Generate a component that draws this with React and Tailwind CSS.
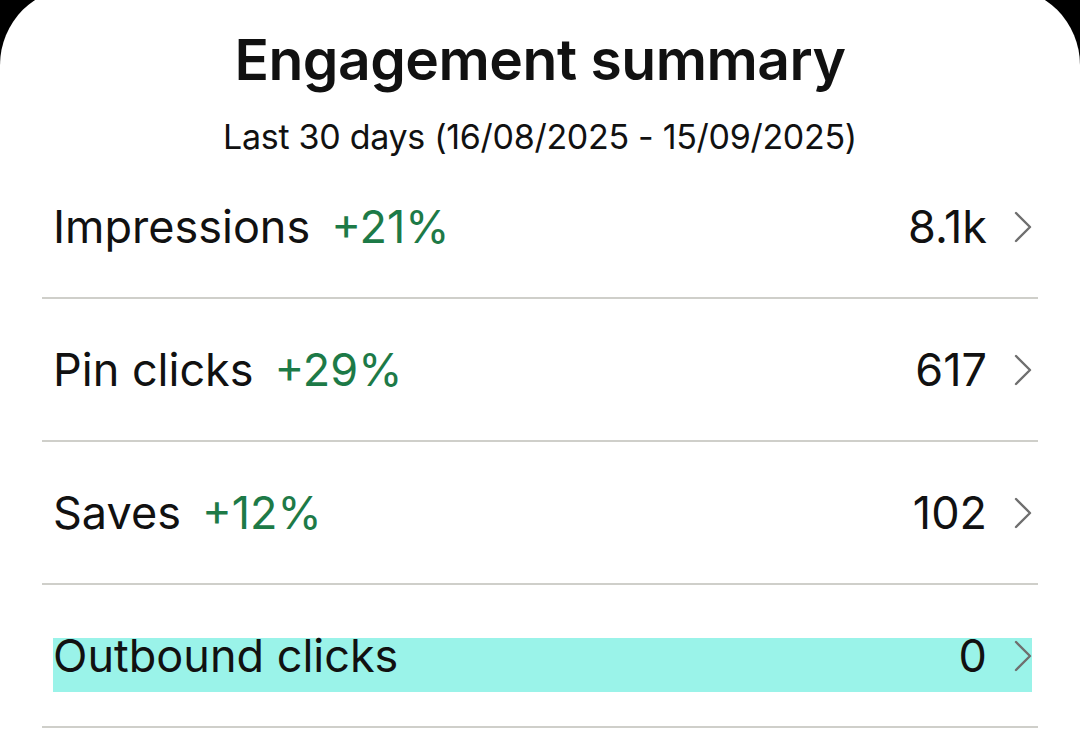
import React from "react";

const rows = [
  { label: "Impressions", change: "+21%", value: "8.1k" },
  { label: "Pin clicks", change: "+29%", value: "617" },
  { label: "Saves", change: "+12%", value: "102" },
  { label: "Outbound clicks", change: null, value: "0", highlight: true },
];

const Chevron = () => (
  <svg width="18" height="32" viewBox="0 0 18 32" fill="none">
    <polyline
      points="2,2 16,16 2,30"
      stroke="#6f6f6f"
      strokeWidth="2.4"
      strokeLinecap="round"
      strokeLinejoin="round"
    />
  </svg>
);

const App = () => {
  return (
    <div className="w-[1080px] h-[740px] bg-black overflow-hidden font-['Inter',sans-serif]">
      <div className="-mt-[13px] h-[760px] bg-white rounded-t-[78px] pt-[38px]">
        <h1 className="text-center text-[57px] leading-[70px] font-semibold text-[#111] tracking-[-0.5px]">
          Engagement summary
        </h1>
        <p className="text-center text-[34px] leading-[42px] text-[#111] mt-[21px] tracking-[-0.3px]">
          Last 30 days (16/08/2025 - 15/09/2025)
        </p>
        <ul className="mx-[42px] -mt-[2px]">
          {rows.map((r) => (
            <li key={r.label} className="border-b-2 border-[#cfcfca] pt-[53px] pb-[34px]">
              <div
                className={
                  "ml-[11px] mr-[6px] h-[54px] flex items-center justify-between " +
                  (r.highlight ? "bg-[#9af3e9]" : "")
                }
              >
                <div className="flex items-center gap-[21px] text-[45px] -mt-[18px]">
                  <span className="text-[#111]">{r.label}</span>
                  {r.change && <span className="text-[#1d7a47]">{r.change}</span>}
                </div>
                <div className="flex items-center gap-[27px] -mt-[18px]">
                  <span className="text-[45px] text-[#111]">{r.value}</span>
                  <Chevron />
                </div>
              </div>
            </li>
          ))}
        </ul>
      </div>
    </div>
  );
};

export default App;
